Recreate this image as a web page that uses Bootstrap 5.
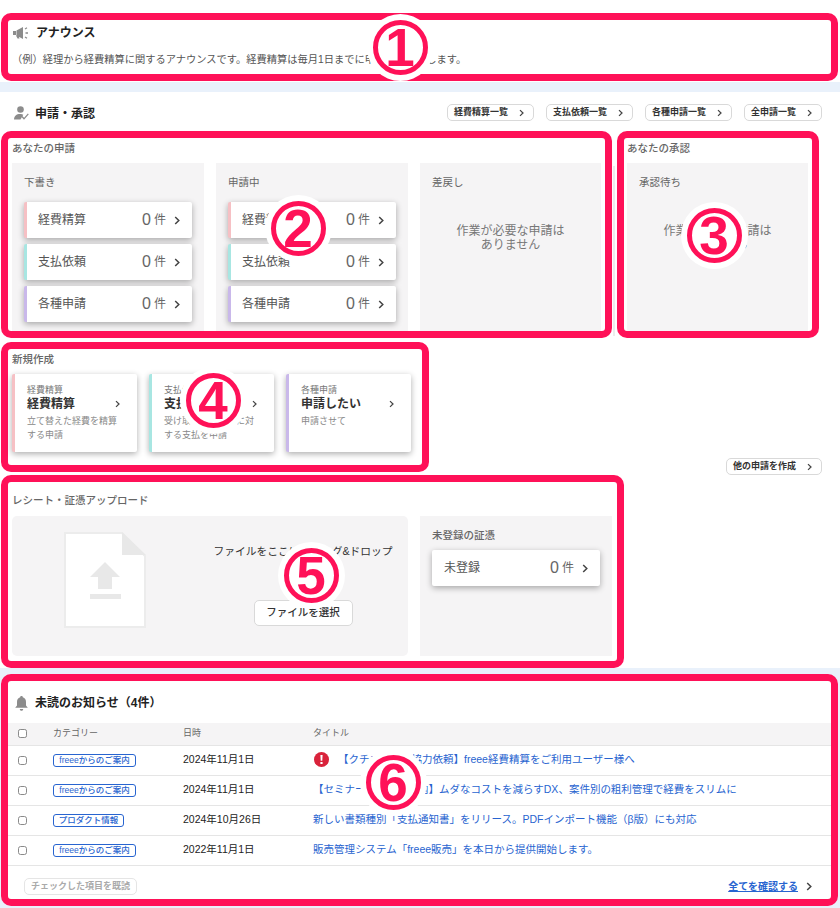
<!DOCTYPE html>
<html lang="ja">
<head>
  <meta charset="UTF-8" />
  <meta name="viewport" content="width=device-width, initial-scale=1.0" />
  <title>ホーム</title>
  <link href="https://cdn.jsdelivr.net/npm/bootstrap@5.3.3/dist/css/bootstrap.min.css" rel="stylesheet" />
  <style>
    html, body { margin: 0; background: #e9f1fb; }
    body { font-family: "Liberation Sans", "Noto Sans CJK JP", sans-serif; font-size: 10.5px; color: #333; }
    .page-wrap { position: relative; width: 840px; height: 908px; overflow: hidden; }
    .sheet { background: #fff; }
    .frame { border: 7px solid #ff1158; border-radius: 10px; background: #fff; }
    .top-area { padding: 13px 2px 1px 1px; }
    .blue-gap { height: 10px; }
    .main-area { height: 576px; padding-left: 1px; }

    .announce { height: 68px; padding: 0 4px 0 4px; }
    .sec-title { font-size: 12px; font-weight: 700; color: #222; line-height: 16px; }
    .announce-head { padding: 5px 0 0 1px; gap: 6px; }
    .announce-text { margin-top: 12px; font-size: 10.25px; line-height: 14px; color: #555; }
    .req-head { height: 39px; padding: 12px 18px 0 13px; }
    .req-head .sec-title { margin-top: 2px; }
    .ttl-icon { margin-right: 6px; flex: none; }
    .mini-btn { height: 17px; padding: 0 9px 0 6px; font-size: 9px; font-weight: 700; line-height: 15px; color: #333; background: #fff; border: 1px solid #d9d9d9; border-radius: 5px; white-space: nowrap; }
    .mini-btn svg { margin-left: 11px; }
    .btn-group-x { gap: 12px; }

    .box-apply { width: 611px; height: 207px; padding: 0 4px; }
    .box-approve { width: 202px; height: 207px; padding: 0 3px; }
    .gap-strip { width: 5px; padding: 35px 2px 2px 1px; }
    .gap-strip div { width: 2px; height: 100%; background: #ececec; }
    .grp-title { font-size: 10.5px; font-weight: 500; color: #666; height: 25px; line-height: 20px; }
    .panel-row { gap: 12px; }
    .work-panel { background: #f5f4f5; padding: 12px; height: 168px; width: 192px; flex: none; }
    .work-panel.narrow { width: 181px; }
    .panel-title { font-size: 10.5px; line-height: 14px; color: #666; margin-bottom: 13px; }
    .stat-card { height: 36px; background: #fff; border-radius: 2px; box-shadow: 0 2px 6px rgba(0,0,0,.32); padding: 0 12px 0 11px; margin-bottom: 6px; font-size: 12px; color: #555; }
    .stripe-pink { border-left: 3px solid #f6c0c4; }
    .stripe-teal { border-left: 3px solid #a8e6e2; }
    .stripe-purple { border-left: 3px solid #c9b8ea; }
    .stat-num { font-size: 16px; color: #666; margin-right: 3px; }
    .stat-unit { font-size: 12px; color: #666; margin-right: 8px; }
    .empty-msg { margin-top: 35px; font-size: 12px; line-height: 14px; color: #777; text-align: center; }

    .create-row { height: 133px; margin-top: 4px; padding-right: 18px; }
    .box-new { width: 428px; height: 130px; padding: 0 4px; }
    .box-new .grp-title { height: 25px; line-height: 20px; }
    .new-cards { gap: 12px; }
    .new-card { width: 125px; height: 78px; background: #fff; border-radius: 2px; box-shadow: 0 2px 6px rgba(0,0,0,.32); padding: 10px 17px 0 12px; }
    .new-small { font-size: 9px; line-height: 12px; color: #777; }
    .new-big { font-size: 12px; line-height: 16px; font-weight: 700; color: #333; }
    .new-desc { margin-top: 2px; font-size: 9px; line-height: 14px; color: #888; white-space: nowrap; }

    .box-upload { width: 623px; height: 193px; padding: 0 4px; }
    .box-upload .grp-title { height: 34px; line-height: 37px; }
    .drop-panel { width: 396px; height: 140px; background: #f5f4f5; border-radius: 5px; padding: 16px 0 0 52px; }
    .drop-side { margin-left: 67px; padding-top: 11px; width: 180px; }
    .drop-text { font-size: 10.75px; line-height: 16px; color: #333; white-space: nowrap; }
    .file-btn { margin-top: 41px; width: 99px; height: 26px; padding: 0; background: #fff; border: 1px solid #d9d9d9; border-radius: 5px; font-size: 10.5px; font-weight: 500; color: #333; }
    .side-panel { width: 192px; height: 140px; background: #f5f4f5; padding: 12px; }
    .side-panel .panel-title { font-weight: 500; margin-bottom: 8px; }
    .side-panel .stat-card { border-radius: 2px; padding-left: 12px; }

    .news-area { padding: 6px 2px 2px 1px; }
    .box-news { height: 232px; }
    .news-head { height: 42px; padding: 2px 0 0 7px; }
    .news-head .ttl-icon { margin-right: 7px; }
    .news-table { width: 823px; table-layout: fixed; margin: 0; font-size: 10.5px; }
    .news-table th, .news-table td { padding: 0; vertical-align: middle; border-bottom: 1px solid #e5e5e5; box-shadow: none; }
    .news-table th { height: 22px; background: #f5f4f5; font-size: 9px; font-weight: 400; color: #666; }
    .news-table td { height: 30px; color: #222; }
    .news-table .cell-check { padding-left: 10px; }
    .tick { display: block; width: 9px; height: 9px; margin: 0; border: 1px solid #8a8a8a; border-radius: 2px; }
    .tag-blue { display: inline-block; height: 13px; padding: 0 6px; border: 1px solid #2864d0; border-radius: 3px; font-size: 8.5px; font-weight: 500; line-height: 10px; color: #2864d0; white-space: nowrap; }
    .tag-blue.tag-wide { width: 83px; text-align: center; padding: 0; }
    .tag-blue.tag-mid { width: 71px; text-align: center; padding: 0; }
    .news-link { color: #2864d0; text-decoration: none; white-space: nowrap; }
    .alert-dot { margin: 0 9px 0 1px; vertical-align: -4px; }
    .news-foot { padding: 12px 19px 0 16px; }
    .read-btn { height: 17px; width: 113px; padding: 0; background: #fff; border: 1px solid #e5e5e5; border-radius: 5px; font-size: 9px; font-weight: 700; line-height: 15px; color: #aaa; }
    .all-link { font-size: 10px; font-weight: 700; color: #2864d0; }
    .all-link + svg { margin-left: 8px; }

    /* numbered markers laid over the screen */
    .marker { position: absolute; width: 55px; height: 55px; margin: -27.5px 0 0 -27.5px; border: 5px solid #ff1158; border-radius: 50%; background: #fff; box-shadow: 0 0 0 6px #fff; color: #ff1158; font-size: 53px; font-weight: 700; line-height: 45px; text-align: center; }
    .m1 { left: 400px; top: 47px; }
    .m2 { left: 298px; top: 228px; }
    .m3 { left: 714px; top: 235px; }
    .m4 { left: 213px; top: 400px; }
    .m5 { left: 311px; top: 575px; }
    .m6 { left: 393px; top: 782px; }
  </style>
</head>
<body>
  <svg width="0" height="0" class="d-none">
    <symbol id="chev" viewBox="0 0 6 9"><path d="M1.2 1 L4.8 4.5 L1.2 8" fill="none" stroke="#444" stroke-width="1.5"/></symbol>
  </svg>

  <div class="page-wrap">
    <div class="sheet top-area">
      <div class="frame announce">
        <div class="d-flex align-items-center announce-head">
          <svg width="17" height="12" viewBox="0 0 17 12"><path d="M0 4h3v4H0z M3.500 3.500 L10 0v12L3.500 8.500z M3 8.500h2.500l1 3h-2z" fill="#8c8c8c"/><path d="M12 2l2-1.200 M12.500 6h2.500 M12 10l2 1.200" stroke="#8c8c8c" stroke-width="1.300" fill="none"/></svg>
          <span class="sec-title">アナウンス</span>
        </div>
        <div class="announce-text">（例）経理から経費精算に関するアナウンスです。経費精算は毎月1日までに申請をお願いします。</div>
      </div>
    </div>
    <div class="blue-gap"></div>

    <div class="sheet main-area">
      <div class="d-flex justify-content-between align-items-start req-head">
        <div class="d-flex align-items-center">
          <svg class="ttl-icon" width="15" height="14" viewBox="0 0 15 14"><circle cx="6.500" cy="3.500" r="3.300" fill="#8c8c8c"/><path d="M0 13.500c0-3.500 2.500-5.500 6-5.500 1.500 0 2.500.3 3.300.8L6.500 13.500z" fill="#8c8c8c"/><path d="M8 10.500l2 2.300 4.300-5" fill="none" stroke="#8c8c8c" stroke-width="1.300"/></svg>
          <span class="sec-title">申請・承認</span>
        </div>
        <div class="d-flex btn-group-x">
          <button class="mini-btn" type="button">経費精算一覧<svg width="5" height="8"><use href="#chev"/></svg></button>
          <button class="mini-btn" type="button">支払依頼一覧<svg width="5" height="8"><use href="#chev"/></svg></button>
          <button class="mini-btn" type="button">各種申請一覧<svg width="5" height="8"><use href="#chev"/></svg></button>
          <button class="mini-btn" type="button">全申請一覧<svg width="5" height="8"><use href="#chev"/></svg></button>
        </div>
      </div>

      <div class="d-flex">
        <section class="frame box-apply">
          <div class="grp-title">あなたの申請</div>
          <div class="d-flex panel-row">
            <div class="work-panel">
              <div class="panel-title">下書き</div>
              <div class="stat-card stripe-pink d-flex align-items-center"><span class="me-auto">経費精算</span><span class="stat-num">0</span><span class="stat-unit">件</span><svg width="6" height="9"><use href="#chev"/></svg></div>
              <div class="stat-card stripe-teal d-flex align-items-center"><span class="me-auto">支払依頼</span><span class="stat-num">0</span><span class="stat-unit">件</span><svg width="6" height="9"><use href="#chev"/></svg></div>
              <div class="stat-card stripe-purple d-flex align-items-center"><span class="me-auto">各種申請</span><span class="stat-num">0</span><span class="stat-unit">件</span><svg width="6" height="9"><use href="#chev"/></svg></div>
            </div>
            <div class="work-panel">
              <div class="panel-title">申請中</div>
              <div class="stat-card stripe-pink d-flex align-items-center"><span class="me-auto">経費精算</span><span class="stat-num">0</span><span class="stat-unit">件</span><svg width="6" height="9"><use href="#chev"/></svg></div>
              <div class="stat-card stripe-teal d-flex align-items-center"><span class="me-auto">支払依頼</span><span class="stat-num">0</span><span class="stat-unit">件</span><svg width="6" height="9"><use href="#chev"/></svg></div>
              <div class="stat-card stripe-purple d-flex align-items-center"><span class="me-auto">各種申請</span><span class="stat-num">0</span><span class="stat-unit">件</span><svg width="6" height="9"><use href="#chev"/></svg></div>
            </div>
            <div class="work-panel narrow">
              <div class="panel-title">差戻し</div>
              <div class="empty-msg">作業が必要な申請は<br>ありません</div>
            </div>
          </div>
        </section>
        <div class="gap-strip"><div></div></div>
        <section class="frame box-approve">
          <div class="grp-title">あなたの承認</div>
          <div class="work-panel narrow">
            <div class="panel-title">承認待ち</div>
            <div class="empty-msg">作業が必要な申請は<br>ありません</div>
          </div>
        </section>
      </div>

      <div class="d-flex justify-content-between create-row">
        <section class="frame box-new">
          <div class="grp-title">新規作成</div>
          <div class="d-flex new-cards">
            <div class="new-card stripe-pink">
              <div class="new-small">経費精算</div>
              <div class="new-big d-flex justify-content-between align-items-center">経費精算<svg width="5" height="8"><use href="#chev"/></svg></div>
              <div class="new-desc">立て替えた経費を精算<br>する申請</div>
            </div>
            <div class="new-card stripe-teal">
              <div class="new-small">支払依頼</div>
              <div class="new-big d-flex justify-content-between align-items-center">支払依頼<svg width="5" height="8"><use href="#chev"/></svg></div>
              <div class="new-desc">受け取った請求書に対<br>する支払を申請</div>
            </div>
            <div class="new-card stripe-purple">
              <div class="new-small">各種申請</div>
              <div class="new-big d-flex justify-content-between align-items-center">申請したい<svg width="5" height="8"><use href="#chev"/></svg></div>
              <div class="new-desc">申請させて</div>
            </div>
          </div>
        </section>
        <button class="mini-btn align-self-end" type="button">他の申請を作成<svg width="5" height="8"><use href="#chev"/></svg></button>
      </div>

      <section class="frame box-upload">
        <div class="grp-title">レシート・証憑アップロード</div>
        <div class="d-flex panel-row">
          <div class="drop-panel d-flex align-items-start">
            <svg width="82" height="96" viewBox="0 0 82 96" class="flex-none">
              <path d="M1 1H58L81 24V95H1z" fill="#fff" stroke="#ececec" stroke-width="2"/>
              <path d="M58 0L82 23H58z" fill="#e8e8e8"/>
              <path d="M41 30L56 45H48V57H34V45H26z M26 62H57V67H26z" fill="#e8e8e8"/>
            </svg>
            <div class="drop-side d-flex flex-column align-items-center">
              <div class="drop-text">ファイルをここにドラッグ&amp;ドロップ</div>
              <button class="file-btn" type="button">ファイルを選択</button>
            </div>
          </div>
          <div class="side-panel">
            <div class="panel-title">未登録の証憑</div>
            <div class="stat-card d-flex align-items-center"><span class="me-auto">未登録</span><span class="stat-num">0</span><span class="stat-unit">件</span><svg width="6" height="9"><use href="#chev"/></svg></div>
          </div>
        </div>
      </section>
    </div>

    <div class="news-area">
      <section class="frame box-news">
        <div class="news-head d-flex align-items-center">
          <svg class="ttl-icon" width="13" height="15" viewBox="0 0 13 15"><path d="M6.500 0c.8 0 1.300.5 1.300 1.200C10 1.800 11 3.600 11 6v3.500l1.800 2.300H.2L2 9.500V6c0-2.400 1-4.200 3.200-4.800C5.200.5 5.700 0 6.500 0z M4.800 13h3.400c0 1.100-.7 1.800-1.700 1.800S4.800 14.100 4.800 13z" fill="#8c8c8c"/></svg>
          <span class="sec-title">未読のお知らせ（4件）</span>
        </div>
        <table class="table news-table">
          <colgroup><col style="width:45px"><col style="width:130px"><col style="width:130px"><col></colgroup>
          <thead>
            <tr><th class="cell-check"><input class="tick form-check-input" type="checkbox"></th><th>カテゴリー</th><th>日時</th><th>タイトル</th></tr>
          </thead>
          <tbody>
            <tr>
              <td class="cell-check"><input class="tick form-check-input" type="checkbox"></td>
              <td><span class="tag-blue tag-wide">freeeからのご案内</span></td>
              <td>2024年11月1日</td>
              <td><svg class="alert-dot" width="15" height="15" viewBox="0 0 15 15"><circle cx="7.500" cy="7.500" r="7.500" fill="#d9233b"/><path d="M6.400 3h2.200l-.3 5.800H6.700z M6.400 10h2.200v2.100H6.400z" fill="#fff"/></svg><a class="news-link" href="#">【クチコミのご協力依頼】freee経費精算をご利用ユーザー様へ</a></td>
            </tr>
            <tr>
              <td class="cell-check"><input class="tick form-check-input" type="checkbox"></td>
              <td><span class="tag-blue tag-wide">freeeからのご案内</span></td>
              <td>2024年11月1日</td>
              <td><a class="news-link" href="#">【セミナー開催のご案内】ムダなコストを減らすDX、案件別の粗利管理で経費をスリムに</a></td>
            </tr>
            <tr>
              <td class="cell-check"><input class="tick form-check-input" type="checkbox"></td>
              <td><span class="tag-blue tag-mid">プロダクト情報</span></td>
              <td>2024年10月26日</td>
              <td><a class="news-link" href="#">新しい書類種別「支払通知書」をリリース。PDFインポート機能（β版）にも対応</a></td>
            </tr>
            <tr>
              <td class="cell-check"><input class="tick form-check-input" type="checkbox"></td>
              <td><span class="tag-blue tag-wide">freeeからのご案内</span></td>
              <td>2022年11月1日</td>
              <td><a class="news-link" href="#">販売管理システム「freee販売」を本日から提供開始します。</a></td>
            </tr>
          </tbody>
        </table>
        <div class="news-foot d-flex justify-content-between align-items-center">
          <button class="read-btn" type="button">チェックした項目を既読</button>
          <div class="d-flex align-items-center"><a class="all-link" href="#">全てを確認する</a><svg width="6" height="9"><use href="#chev"/></svg></div>
        </div>
      </section>
    </div>

    <div class="marker m1">1</div>
    <div class="marker m2">2</div>
    <div class="marker m3">3</div>
    <div class="marker m4">4</div>
    <div class="marker m5">5</div>
    <div class="marker m6">6</div>
  </div>

  <script src="https://cdn.jsdelivr.net/npm/bootstrap@5.3.3/dist/js/bootstrap.bundle.min.js"></script>
</body>
</html>
